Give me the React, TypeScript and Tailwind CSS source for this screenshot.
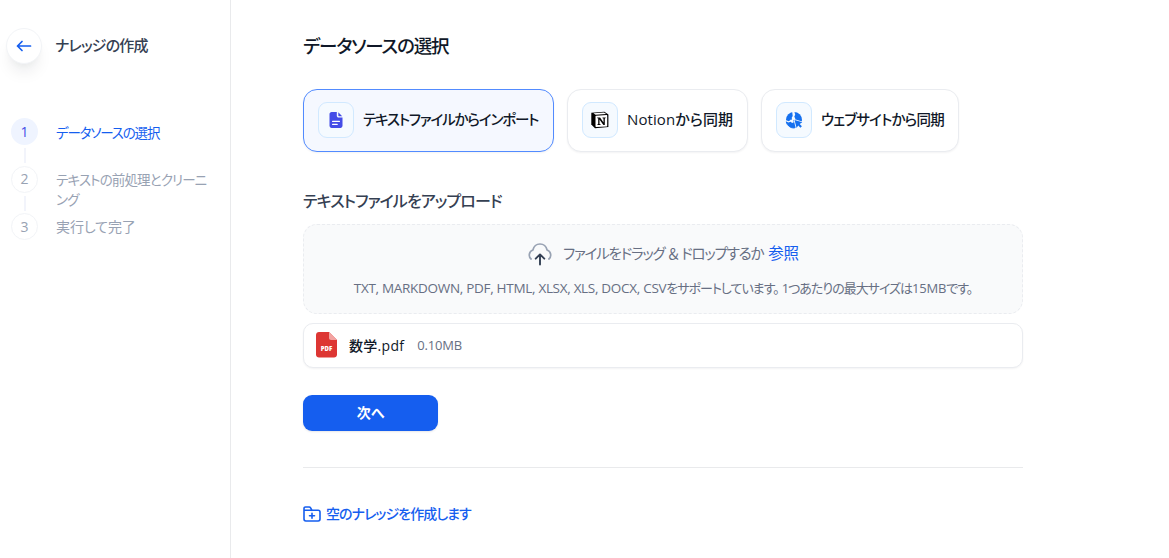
import React from "react";
import clsx from "clsx";

interface Step {
    index: number;
    title: React.ReactNode;
    className: string;
}

interface DataSource {
    id: string;
    label: string;
    icon: React.ReactNode;
    cardClass: string;
    labelClass: string;
}

const FileTextIcon = () => (
    <svg width="16" height="18" viewBox="0 0 16 18" fill="none">
        <path
            d="M3.600 1h5.200v3.800c0 1 .8 1.800 1.800 1.800H14.500v8.200c0 1.200-.9 2.200-2.100 2.200H3.600c-1.200 0-2.100-1-2.100-2.200V3.200C1.500 2 2.400 1 3.600 1Z"
            fill="#444ce7"
        />
        <path d="M10.300 1.200 14.200 5.200H11c-.4 0-.7-.3-.7-.7V1.200Z" fill="#444ce7" />
        <path d="M4.600 10.400h6.800M4.600 13.400h4.600" stroke="#fff" strokeWidth="1.2" strokeLinecap="round" />
    </svg>
);

const NotionIcon = () => (
    <svg width="20" height="18" viewBox="0 0 20 18" fill="none">
        <path d="M1.300 1.800 14.400.7l4 2.700v12.500L5 17.300 1.300 13.600Z" fill="#000" />
        <path d="M3.500 2.300 14 1.600l2.200 1.400-10.700.8Z" fill="#fff" />
        <path d="M5.500 5.300c0-.4.200-.6.600-.6l10.600-.7c.3 0 .5.200.5.500v10.400c0 .3-.2.500-.5.500l-10.600.7c-.4 0-.6-.2-.6-.5Z" fill="#fff" />
        <path
            d="M7.200 6.600h2.900l3.400 4.800V7.500l-1-.3v-.8h3.200v.7l-.9.4v6.500h-1.400L9.500 8.600v4.500l1.200.3v.7H7.300v-.6l.9-.5V7.300l-1-.1Z"
            fill="#000"
        />
    </svg>
);

const WebsiteIcon = () => (
    <svg width="18" height="18" viewBox="0 0 18 18" fill="none">
        <circle cx="9" cy="9" r="8" fill="#1570ef" />
        {/* land masses */}
        <path d="M7.200.8h2.200l.8 2.900-.9 1.800 1.100 2.600-2.200.9.6 2.200-1.700.9-1.500-1.300-2.300.6L1 10.200v-.9l2.900.9 2-1.600 1.200.2-.4-2.100 1-1.600Z" fill="#f5faff" />
        {/* cursor with its outline */}
        <path d="M8.300 7.800 18 10.700v7.300h-7Z" fill="#f5faff" />
        <path d="M9.500 9 17.300 11.300 14.700 13 16.900 15.200 15.400 16.700 13.200 14.500 11.600 17Z" fill="#1570ef" />
        <path d="M1.200 10.800A8 8 0 0 0 9.600 17" stroke="#1570ef" strokeWidth="1" />
    </svg>
);

const UploadIcon = () => (
    <svg width="26" height="24" viewBox="0 0 26 24" fill="none" strokeLinecap="round" strokeLinejoin="round">
        <path
            d="M4.100 17A5.300 5.300 0 0 1 5.900 8C6.800 4.300 9.500 2 13 2s6.200 2.300 7.100 6a5.300 5.300 0 0 1 1.800 9"
            stroke="#98a2b3"
            strokeWidth="1.700"
        />
        <path d="M13 22.500V13M8.700 16.700 13 12.400l4.300 4.300" stroke="#344054" strokeWidth="1.900" />
    </svg>
);

const PdfIcon = () => (
    <svg width="21" height="26" viewBox="0 0 21 26">
        <path d="M3 0h10l8 8v14.500c0 1.700-1.300 3-3 3H3c-1.700 0-3-1.300-3-3V3c0-1.700 1.300-3 3-3Z" fill="#dd3633" />
        <path d="m13 0 8 8h-6c-1.100 0-2-.9-2-2Z" fill="#f3a3a1" />
        <text x="10.500" y="19.200" textAnchor="middle" fontSize="6" fontWeight="800" fontFamily="Open Sans, sans-serif" fill="#fff">
            PDF
        </text>
    </svg>
);

const FolderPlusIcon = () => (
    <svg width="18" height="16" viewBox="0 0 18 16" fill="none" stroke="#155eef" strokeWidth="1.600" strokeLinecap="round" strokeLinejoin="round">
        <path d="M1 4.300V2.500C1 1.600 1.600 1 2.500 1h3.800c.6 0 1 .3 1.300.8l1.400 2.500M1 4.300h14.200c1.100 0 1.800.7 1.800 1.800v7c0 1.100-.7 1.900-1.800 1.900H2.800C1.700 15 1 14.200 1 13.100Z" />
        <path d="M9 7.200v5M6.500 9.700h5" />
    </svg>
);

const steps: Step[] = [
    { index: 1, title: "データソースの選択", className: "mt-[5px] text-[13.5px] tracking-[-1.15px]" },
    { index: 2, title: <>テキストの前処理とクリーニ<br />ング</>, className: "mt-1 text-[13.5px] tracking-[-0.85px]" },
    { index: 3, title: "実行して完了", className: "mt-1 text-sm tracking-[-0.1px]" },
];

const dataSources: DataSource[] = [
    {
        id: "file",
        label: "テキストファイルからインポート",
        icon: <FileTextIcon />,
        cardClass: "w-[251px] border-[#528bff] bg-[#f5f8ff]",
        labelClass: "text-[14.5px] tracking-[-1.15px]",
    },
    {
        id: "notion",
        label: "Notionから同期",
        icon: <NotionIcon />,
        cardClass: "w-[181px] border-[#eaecf0] bg-white",
        labelClass: "text-[15px] tracking-[0.1px]",
    },
    {
        id: "website",
        label: "ウェブサイトから同期",
        icon: <WebsiteIcon />,
        cardClass: "w-[198px] border-[#eaecf0] bg-white",
        labelClass: "text-[14.5px] tracking-[-0.8px]",
    },
];

const Sidebar: React.FC = () => (
    <aside className="w-[231px] shrink-0 border-r border-[#e9eaec]">
        <div className="flex items-center pl-1.5 pt-7">
            <button
                type="button"
                aria-label="戻る"
                className="flex h-9 w-9 items-center justify-center rounded-full border border-[#f2f4f7] bg-white shadow-[0_12px_16px_-4px_rgba(16,24,40,0.08),0_4px_6px_-2px_rgba(16,24,40,0.03)]"
            >
                <svg width="16" height="14" viewBox="0 0 16 14" fill="none" stroke="#155eef" strokeWidth="1.700" strokeLinecap="round" strokeLinejoin="round">
                    <path d="M14.500 7h-13M6 2.500 1.500 7 6 11.500" />
                </svg>
            </button>
            <h1 className="ml-[13px] whitespace-nowrap pb-px text-[15px] font-medium tracking-[-0.85px] text-[#354052]">ナレッジの作成</h1>
        </div>

        <ol className="mt-[54px] pl-[11px]">
            {steps.map((step) => (
                <li key={step.index} className="flex h-[47.500px]">
                    <div className="flex w-[27px] flex-col items-center">
                        <span
                            className={clsx(
                                "flex h-[27px] w-[27px] shrink-0 items-center justify-center rounded-full text-sm",
                                step.index === 1 ? "bg-[#eff4ff] text-[#444ce7]" : "border border-[#f2f4f7] text-[#98a2b3]"
                            )}
                        >
                            {step.index}
                        </span>
                        {step.index < steps.length && <span className="mt-[3px] h-[15px] w-0.5 bg-[#f2f4fb]" />}
                    </div>
                    <span
                        className={clsx(
                            "ml-[18px] whitespace-nowrap leading-5",
                            step.index === 1 ? "text-[#155eef]" : "text-[#98a2b3]",
                            step.className
                        )}
                    >
                        {step.title}
                    </span>
                </li>
            ))}
        </ol>
    </aside>
);

const DataSourceCard: React.FC<{ source: DataSource }> = ({ source }) => (
    <div
        className={clsx(
            "flex h-[63px] items-center rounded-[14px] border pb-0.5 pl-3.5 shadow-[0_1px_2px_rgba(16,24,40,0.05)]",
            source.cardClass
        )}
    >
        <div className="flex h-9 w-9 shrink-0 items-center justify-center rounded-[9px] border border-[#d1e9ff] bg-[#f5faff]">
            {source.icon}
        </div>
        <span className={clsx("ml-[9px] whitespace-nowrap font-medium text-[#101828]", source.labelClass)}>
            {source.label}
        </span>
    </div>
);

const App: React.FC = () => {
    return (
        <div className="flex h-[558px] w-[1169px] overflow-hidden bg-white font-['Open_Sans','Noto_Sans_CJK_JP',sans-serif] [font-feature-settings:'palt']">
            <Sidebar />
            <main className="w-[792px] pl-[72px]">
                <h2 className="mt-8 whitespace-nowrap text-[18.5px] font-medium leading-7 tracking-[-1.15px] text-[#101828]">
                    データソースの選択
                </h2>

                <div className="mt-[29px] flex gap-[13px]">
                    {dataSources.map((source) => (
                        <DataSourceCard key={source.id} source={source} />
                    ))}
                </div>

                <h3 className="mt-[37px] text-base font-medium leading-6 tracking-[-0.9px] text-[#354052]">
                    テキストファイルをアップロード
                </h3>

                {/* Drop zone */}
                <div className="mt-[11px] flex h-[90px] flex-col items-center rounded-[14px] border border-dashed border-[#eaecf0] bg-[#f9fafb] pt-[17px] text-[#676f83]">
                    <div className="flex h-6 items-center whitespace-nowrap">
                        <UploadIcon />
                        <span className="ml-2.5 text-[14.5px] tracking-[-1.2px]">
                            ファイルをドラッグ<span className="mx-[3px]">＆</span>ドロップするか
                        </span>
                        <a className="ml-[5px] text-[15.5px] tracking-[-0.2px] text-[#155eef]">参照</a>
                    </div>
                    <p className="mt-3 whitespace-nowrap text-[13px] leading-5">
                        <span className="text-[13.5px] tracking-[-0.3px]">TXT, MARKDOWN, PDF, HTML, XLSX, XLS, DOCX, CSV</span>
                        <span className="tracking-[-1px]">をサポートしています。</span>
                        <span className="ml-[3px] tracking-[-1px]">1つあたりの最大サイズは</span>
                        <span className="tracking-[-0.2px]">15MB</span>
                        <span className="tracking-[-1px]">です。</span>
                    </p>
                </div>

                {/* Uploaded file */}
                <div className="mt-[9px] flex h-[45px] items-center rounded-[10px] border border-[#eaecf0] bg-white pl-3 shadow-[0_1px_2px_rgba(16,24,40,0.05)]">
                    <div className="pb-0.5">
                        <PdfIcon />
                    </div>
                    <span className="ml-3 text-sm font-medium tracking-[0.3px] text-[#101828]">数学.pdf</span>
                    <span className="ml-[13px] text-[13px] tracking-[-0.200px] text-[#676f83]">0.10MB</span>
                </div>

                <button
                    type="button"
                    className="mt-[27px] flex h-9 w-[135px] items-center justify-center rounded-[9px] bg-[#155eef] text-sm font-bold text-white shadow-[0_1px_2px_rgba(16,24,40,0.1)]"
                >
                    次へ
                </button>

                <div className="mt-9 h-px bg-[#e9eaec]" />

                <a className="mt-9 flex h-5 items-center text-[#155eef]">
                    <FolderPlusIcon />
                    <span className="ml-[5px] whitespace-nowrap text-sm font-medium tracking-[-0.95px]">空のナレッジを作成します</span>
                </a>
            </main>
        </div>
    );
};

export default App;
